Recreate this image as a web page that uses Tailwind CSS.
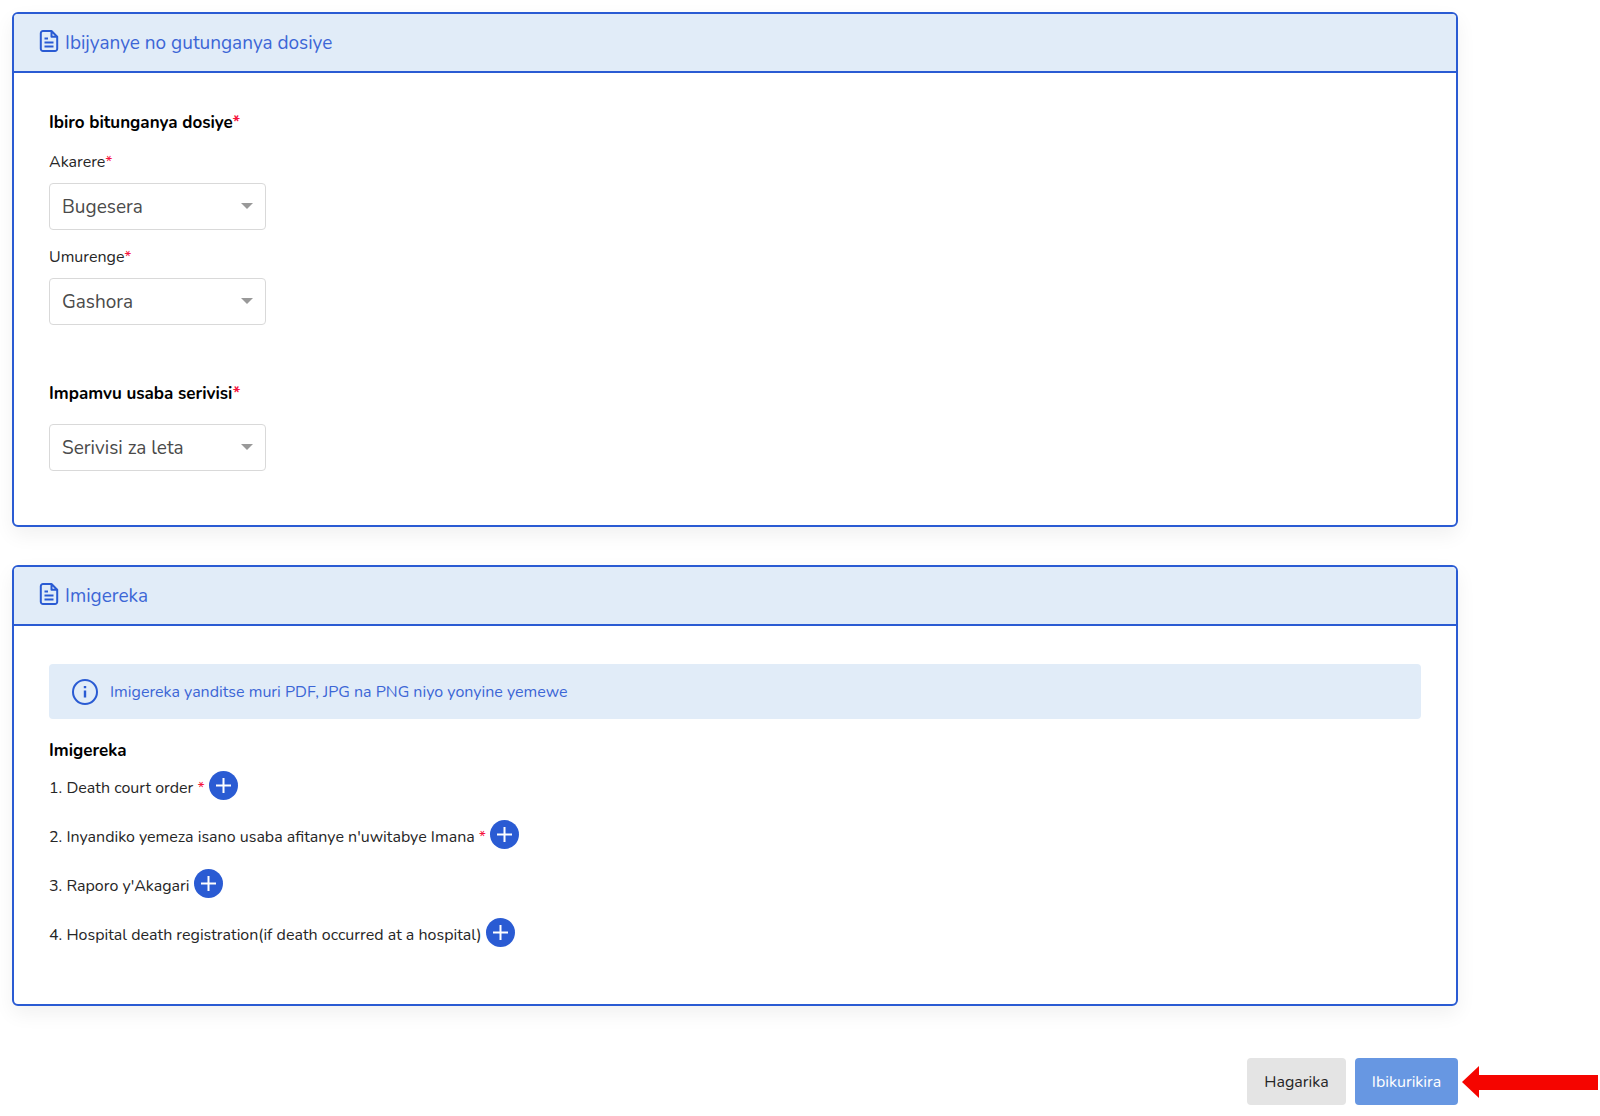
<!DOCTYPE html>
<html lang="rw">
<head>
    <meta charset="UTF-8">
    <meta name="viewport" content="width=device-width, initial-scale=1.0">
    <title>Imigereka</title>
    <script src="https://cdn.jsdelivr.net/npm/@tailwindcss/browser@4"></script>
</head>
<body class="min-h-screen bg-white font-[Nunito,Lato,sans-serif] text-base text-neutral-800">

    <form class="pt-3 pl-3 pr-[142px] pb-3">

        <!-- Processing office -->
        <section class="border-2 border-[#2a5bd3] rounded-md bg-white shadow-[0_8px_20px_rgba(0,0,0,0.06)] mb-[38px]">
            <div class="flex items-center gap-[6px] h-[59px] pl-[25px] border-b-2 border-[#2a5bd3] bg-[#e1ecf8] rounded-t text-[#3c66d6]">
                <svg class="w-5 h-6 mb-1" viewBox="0 0 20 24" fill="none" stroke="#2a5bd3" stroke-width="2" stroke-linejoin="round">
                    <path d="M12.5 2H4a2.200 2.200 0 0 0-2.200 2.200v15.600A2.200 2.200 0 0 0 4 22h12a2.200 2.200 0 0 0 2.200-2.200V7.700L12.500 2v5.700h5.700"/>
                    <path d="M5.500 9.500h3.500M5.500 13.500h9M5.500 17.500h9"/>
                </svg>
                <h2 class="pt-[2px] text-[19px]">Ibijyanye no gutunganya dosiye</h2>
            </div>
            <div class="px-[35px] pt-[38px] pb-[54px]">
                <h3 class="text-[17px] leading-6 font-bold text-black">Ibiro bitunganya dosiye<span class="text-[#f5123d]">*</span></h3>
                <label for="district" class="block mt-[15px] leading-6">Akarere<span class="text-[#f5123d]">*</span></label>
                <div class="relative w-[217px] mt-[9px]">
                    <select id="district" class="block w-full h-[47px] pt-[2px] pl-3 pr-10 appearance-none border border-[#d9d9d9] rounded bg-white text-[19px] text-[#4a4a4a]">
                        <option>Bugesera</option>
                    </select>
                    <svg class="absolute right-[13px] top-5 w-3 h-[6px] pointer-events-none" viewBox="0 0 12 6"><path d="M0 0h12L6 6z" fill="#999"/></svg>
                </div>
                <label for="sector" class="block mt-[15px] leading-6">Umurenge<span class="text-[#f5123d]">*</span></label>
                <div class="relative w-[217px] mt-[9px]">
                    <select id="sector" class="block w-full h-[47px] pt-[2px] pl-3 pr-10 appearance-none border border-[#d9d9d9] rounded bg-white text-[19px] text-[#4a4a4a]">
                        <option>Gashora</option>
                    </select>
                    <svg class="absolute right-[13px] top-5 w-3 h-[6px] pointer-events-none" viewBox="0 0 12 6"><path d="M0 0h12L6 6z" fill="#999"/></svg>
                </div>
                <label for="reason" class="block mt-[57px] text-[17px] leading-6 font-bold text-black">Impamvu usaba serivisi<span class="text-[#f5123d]">*</span></label>
                <div class="relative w-[217px] mt-[18px]">
                    <select id="reason" class="block w-full h-[47px] pt-[2px] pl-3 pr-10 appearance-none border border-[#d9d9d9] rounded bg-white text-[19px] text-[#4a4a4a]">
                        <option>Serivisi za leta</option>
                    </select>
                    <svg class="absolute right-[13px] top-5 w-3 h-[6px] pointer-events-none" viewBox="0 0 12 6"><path d="M0 0h12L6 6z" fill="#999"/></svg>
                </div>
            </div>
        </section>

        <!-- Attachments -->
        <section class="border-2 border-[#2a5bd3] rounded-md bg-white shadow-[0_8px_20px_rgba(0,0,0,0.06)]">
            <div class="flex items-center gap-[6px] h-[59px] pl-[25px] border-b-2 border-[#2a5bd3] bg-[#e1ecf8] rounded-t text-[#3c66d6]">
                <svg class="w-5 h-6 mb-1" viewBox="0 0 20 24" fill="none" stroke="#2a5bd3" stroke-width="2" stroke-linejoin="round">
                    <path d="M12.5 2H4a2.200 2.200 0 0 0-2.200 2.200v15.600A2.200 2.200 0 0 0 4 22h12a2.200 2.200 0 0 0 2.200-2.200V7.700L12.500 2v5.700h5.700"/>
                    <path d="M5.500 9.500h3.500M5.500 13.500h9M5.500 17.500h9"/>
                </svg>
                <h2 class="pt-[2px] text-[19px]">Imigereka</h2>
            </div>
            <div class="px-[35px] pt-[38px] pb-[57px]">
                <div class="flex items-center gap-3 h-[55px] pl-[23px] rounded bg-[#e1ecf8] text-[#3c66d6]">
                    <svg class="w-[26px] h-[26px]" viewBox="0 0 26 26" fill="none" stroke="#2a5bd3" stroke-width="2">
                        <circle cx="13" cy="13" r="12"/>
                        <path d="M13 11.500v7M13 7v2.200" stroke-width="2.400"/>
                    </svg>
                    <p>Imigereka yanditse muri PDF, JPG na PNG niyo yonyine yemewe</p>
                </div>
                <h3 class="mt-5 text-[17px] leading-6 font-bold text-black">Imigereka</h3>
                <ul class="mt-2 space-y-5">
                    <li class="flex items-center gap-1 h-[29px]">
                        <span class="pt-1">1. Death court order <span class="text-[#f5123d]">*</span></span>
                        <button type="button" aria-label="Death court order" class="w-[29px] h-[29px] rounded-full bg-[#2a5bd3]">
                            <svg class="w-[29px] h-[29px]" viewBox="0 0 29 29" stroke="#fff" stroke-width="2"><path d="M7 14.500h15M14.500 7v15"/></svg>
                        </button>
                    </li>
                    <li class="flex items-center gap-1 h-[29px]">
                        <span class="pt-1">2. Inyandiko yemeza isano usaba afitanye n'uwitabye Imana <span class="text-[#f5123d]">*</span></span>
                        <button type="button" aria-label="Inyandiko yemeza isano" class="w-[29px] h-[29px] rounded-full bg-[#2a5bd3]">
                            <svg class="w-[29px] h-[29px]" viewBox="0 0 29 29" stroke="#fff" stroke-width="2"><path d="M7 14.500h15M14.500 7v15"/></svg>
                        </button>
                    </li>
                    <li class="flex items-center gap-1 h-[29px]">
                        <span class="pt-1">3. Raporo y'Akagari</span>
                        <button type="button" aria-label="Raporo y'Akagari" class="w-[29px] h-[29px] rounded-full bg-[#2a5bd3]">
                            <svg class="w-[29px] h-[29px]" viewBox="0 0 29 29" stroke="#fff" stroke-width="2"><path d="M7 14.500h15M14.500 7v15"/></svg>
                        </button>
                    </li>
                    <li class="flex items-center gap-1 h-[29px]">
                        <span class="pt-1">4. Hospital death registration(if death occurred at a hospital)</span>
                        <button type="button" aria-label="Hospital death registration" class="w-[29px] h-[29px] rounded-full bg-[#2a5bd3]">
                            <svg class="w-[29px] h-[29px]" viewBox="0 0 29 29" stroke="#fff" stroke-width="2"><path d="M7 14.500h15M14.500 7v15"/></svg>
                        </button>
                    </li>
                </ul>
            </div>
        </section>

        <!-- Actions -->
        <div class="relative flex justify-end gap-[9px] mt-[52px]">
            <button type="button" class="w-[99px] h-[47px] rounded bg-[#e4e4e4]">Hagarika</button>
            <button type="submit" class="w-[103px] h-[47px] rounded bg-[#6797e2] text-white">Ibikurikira</button>
            <svg class="absolute left-full top-2 ml-1 w-[136px] h-8" viewBox="0 0 136 32"><path d="M0 16L17 0v9h119v15H17v8z" fill="#f50500"/></svg>
        </div>
    </form>

</body>
</html>
